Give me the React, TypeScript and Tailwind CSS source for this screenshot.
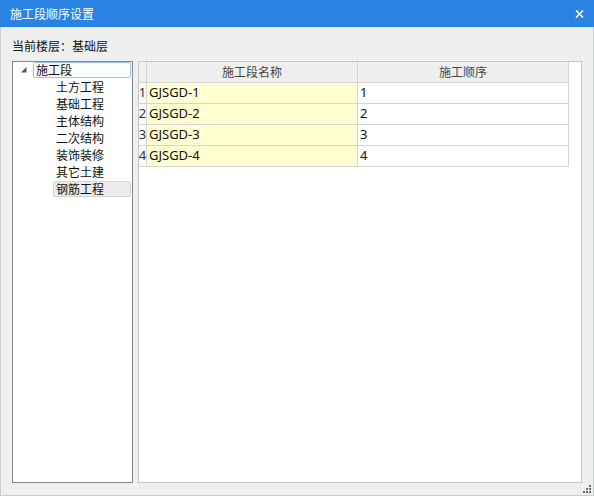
import React from "react";

const CHILDREN = ["土方工程", "基础工程", "主体结构", "二次结构", "装饰装修", "其它土建", "钢筋工程"];
const ROWS = [
  { no: 1, name: "GJSGD-1", order: "1" },
  { no: 2, name: "GJSGD-2", order: "2" },
  { no: 3, name: "GJSGD-3", order: "3" },
  { no: 4, name: "GJSGD-4", order: "4" },
];

const cjk = "font-['Noto_Sans_CJK_SC',sans-serif]";
const latin = "font-['Noto_Sans','Noto_Sans_CJK_SC',sans-serif]";

export default function App() {
  return (
    <div className={`relative w-[594px] h-[496px] flex flex-col bg-[#efefef] ${cjk}`}>
      {/* Title bar */}
      <div className="h-[27px] shrink-0 bg-[#2a82e2] flex items-center justify-between pl-[10px] pr-[10px]">
        <span className="text-white text-[12px] leading-none">施工段顺序设置</span>
        <svg width="9" height="8" viewBox="0 0 9 8" className="mr-[0px]">
          <path d="M1 0.5 L8 7.5 M8 0.5 L1 7.5" stroke="white" strokeWidth="1.6" />
        </svg>
      </div>

      {/* Body */}
      <div className="flex-1 flex flex-col border-x border-b border-[#c9ccd2] px-[11px]">
        <div className="h-[34px] shrink-0 pt-[11px] text-[12px] leading-[16px] text-[#111]">当前楼层：基础层</div>

        <div className="h-[422px] flex gap-[5px]">
          {/* Tree */}
          <div className="w-[121px] h-full bg-white border border-[#828790] pt-[0px]">
            <div className="h-[17px] flex items-start">
              <div className="w-[20px] h-[16px] flex items-center pl-[8px]">
                <svg width="6" height="6" viewBox="0 0 6 6">
                  <path d="M5.5 0 L5.5 5.5 L0 5.5 Z" fill="#555" />
                </svg>
              </div>
              <div className="flex-1 mr-[1px] h-[16px] flex items-center pl-[2px] rounded-[2px] border border-[#9cc3ee] bg-[#fbfdff] text-[12px] text-[#111]">
                施工段
              </div>
            </div>
            {CHILDREN.map((c, i) => (
              <div key={c} className="h-[17px] flex items-start pl-[40px]">
                <div
                  className={`flex-1 mr-[1px] h-[16px] flex items-center pl-[2px] rounded-[2px] text-[12px] text-[#111] border ${
                    i === CHILDREN.length - 1 ? "border-[#d5d5d5] bg-[#ececec]" : "border-transparent"
                  }`}
                >
                  {c}
                </div>
              </div>
            ))}
          </div>

          {/* Grid */}
          <div className="w-[444px] h-full bg-white border border-[#c8c8c8]">
            <div className="w-[430px]">
              <div className="h-[21px] flex border-b border-[#d5d5d5] bg-[#efefef] text-[12px] text-[#444]">
                <div className="w-[8px] border-r border-[#d5d5d5]" />
                <div className="w-[211px] border-r border-[#d5d5d5] flex items-center justify-center">施工段名称</div>
                <div className="w-[211px] border-r border-[#d5d5d5] flex items-center justify-center">施工顺序</div>
              </div>
              {ROWS.map((r) => (
                <div key={r.no} className={`h-[21px] flex border-b border-[#d5d5d5] text-[13px] text-[#111] ${latin}`}>
                  <div className="w-[8px] border-r border-[#d5d5d5] bg-[#fafafa] flex items-center justify-center text-[#333]">{r.no}</div>
                  <div className="w-[211px] border-r border-[#d5d5d5] bg-[#ffffd2] flex items-center pl-[2px]">{r.name}</div>
                  <div className="w-[211px] border-r border-[#d5d5d5] flex items-center pl-[2px]">{r.order}</div>
                </div>
              ))}
            </div>
          </div>
        </div>
      </div>

      {/* Resize grip */}
      <svg width="9" height="9" viewBox="0 0 9 9" className="absolute right-[3px] bottom-[3px]">
        <g fill="#6d6d6d">
          <rect x="7" y="1" width="2" height="2" />
          <rect x="4" y="4" width="2" height="2" />
          <rect x="7" y="4" width="2" height="2" />
          <rect x="1" y="7" width="2" height="2" />
          <rect x="4" y="7" width="2" height="2" />
          <rect x="7" y="7" width="2" height="2" />
        </g>
      </svg>
    </div>
  );
}
